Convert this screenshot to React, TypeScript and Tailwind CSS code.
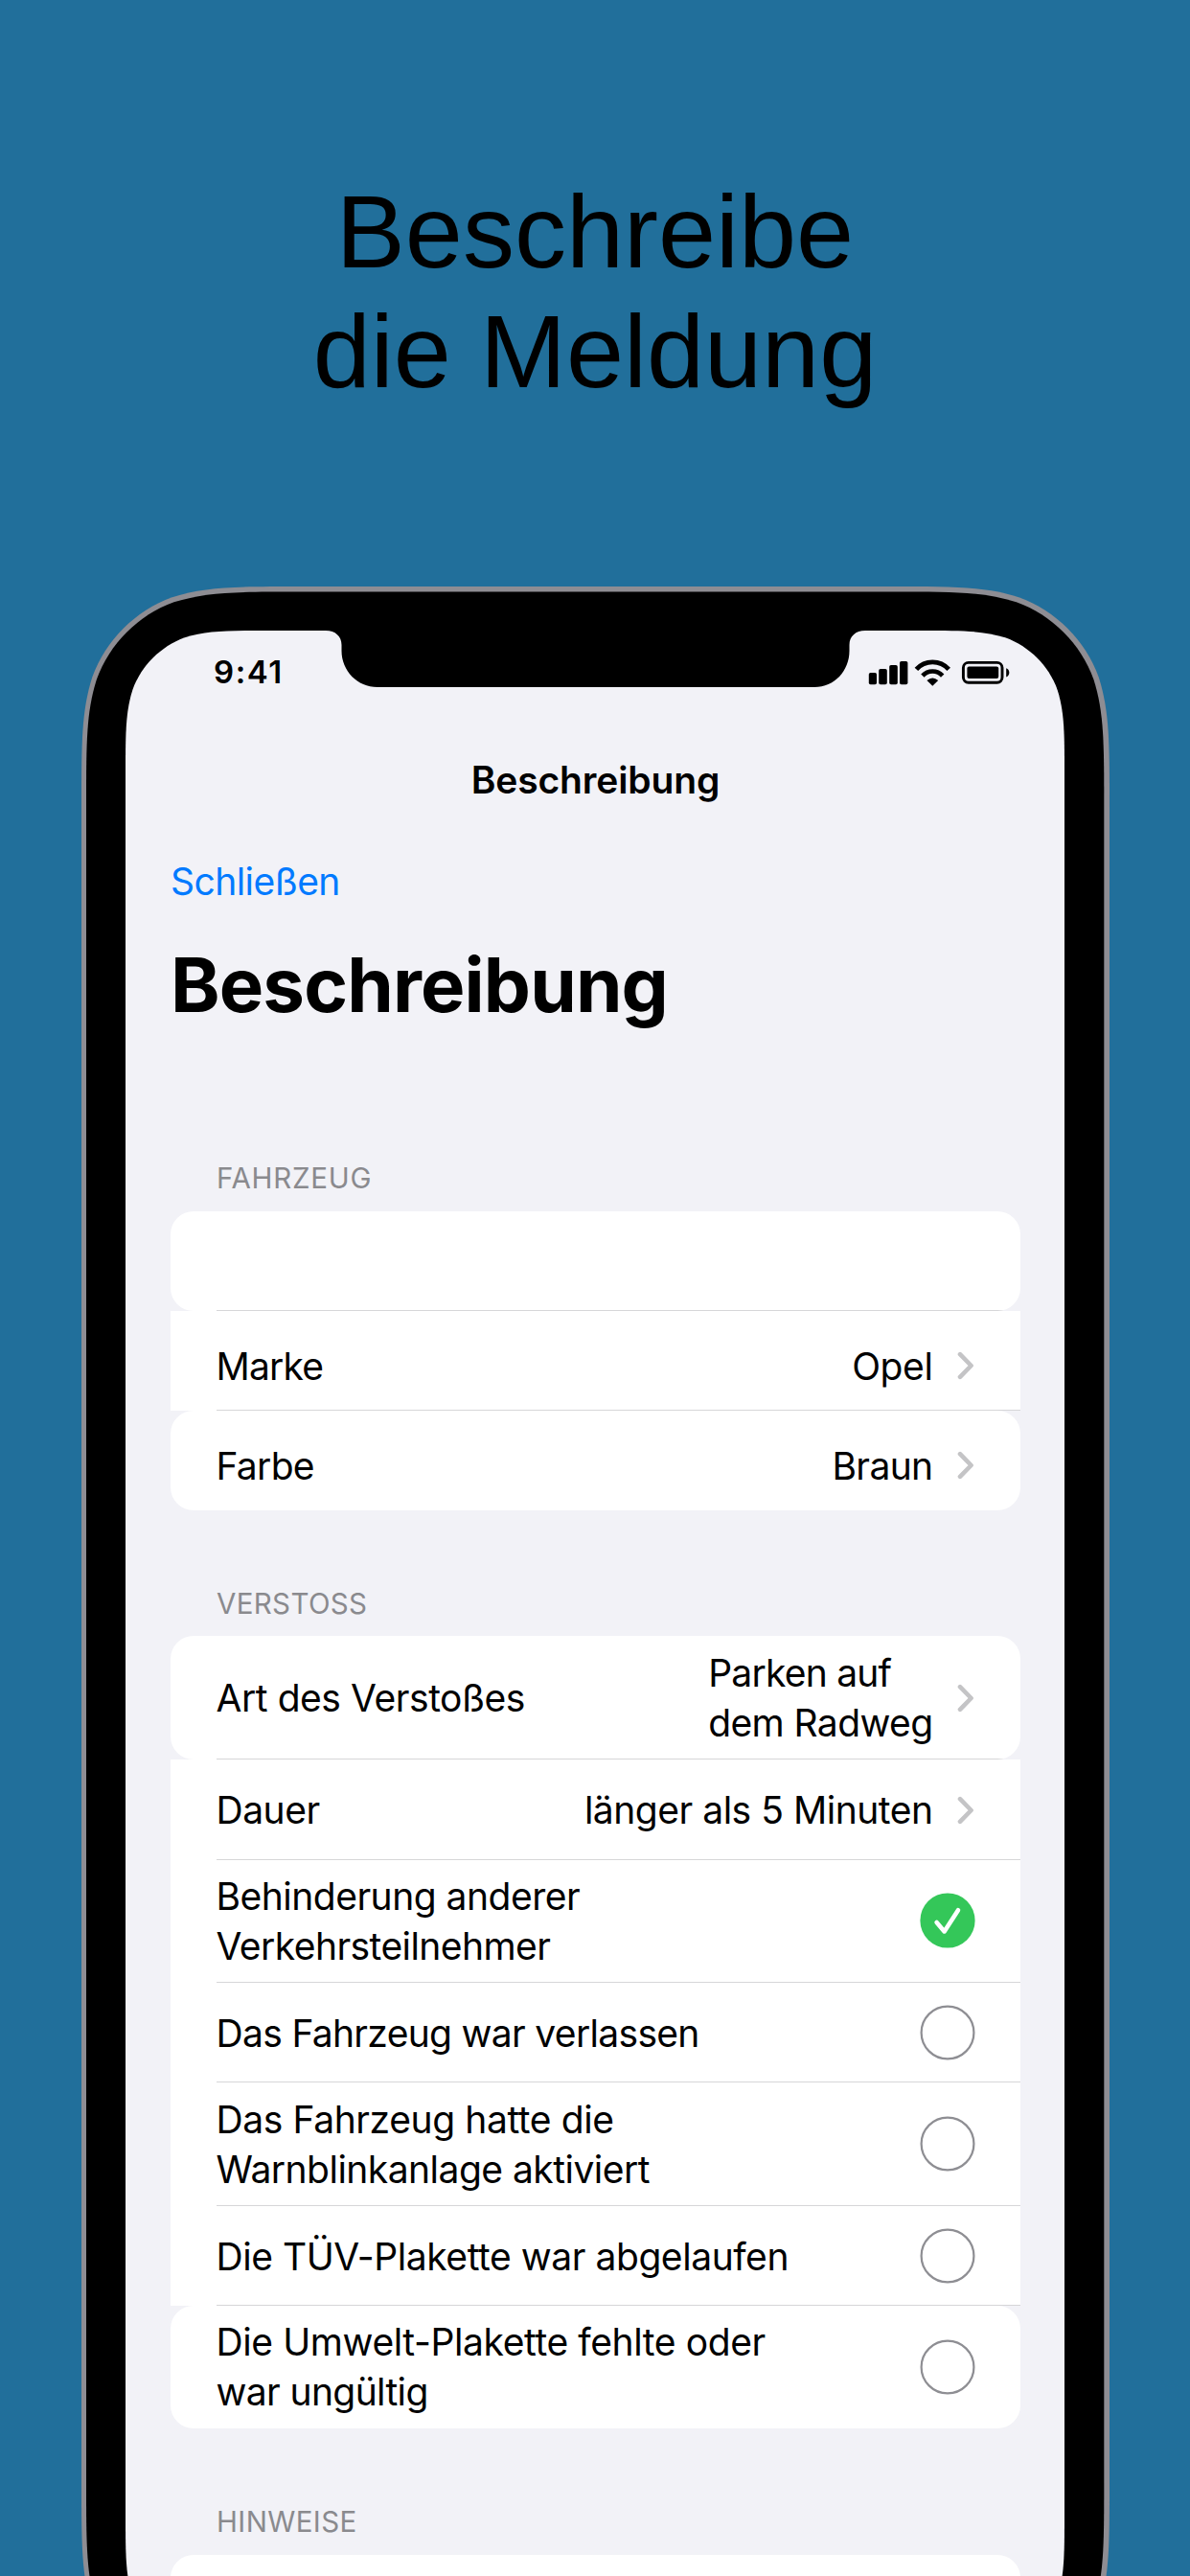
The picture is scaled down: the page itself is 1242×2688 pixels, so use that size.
import type { ReactNode } from "react";

/** Rectangle with continuous ("squircle") corners, as used for the device outline. */
function squircle(x: number, y: number, w: number, h: number, r: number): string {
  const a = 1.52866498 * r;
  const b = 1.08849296 * r;
  const c = 0.86840694 * r;
  const d = 0.63149379 * r;
  const e = 0.07491139 * r;
  const f = 0.37282383 * r;
  const g = 0.16905956 * r;
  const R = x + w;
  const B = y + h;
  return [
    `M${x + a} ${y}`,
    `L${R - a} ${y}`,
    `C${R - b} ${y} ${R - c} ${y} ${R - d} ${y + e}`,
    `C${R - f} ${y + g} ${R - g} ${y + f} ${R - e} ${y + d}`,
    `C${R} ${y + c} ${R} ${y + b} ${R} ${y + a}`,
    `L${R} ${B - a}`,
    `C${R} ${B - b} ${R} ${B - c} ${R - e} ${B - d}`,
    `C${R - g} ${B - f} ${R - f} ${B - g} ${R - d} ${B - e}`,
    `C${R - c} ${B} ${R - b} ${B} ${R - a} ${B}`,
    `L${x + a} ${B}`,
    `C${x + b} ${B} ${x + c} ${B} ${x + d} ${B - e}`,
    `C${x + f} ${B - g} ${x + g} ${B - f} ${x + e} ${B - d}`,
    `C${x} ${B - c} ${x} ${B - b} ${x} ${B - a}`,
    `L${x} ${y + a}`,
    `C${x} ${y + b} ${x} ${y + c} ${x + e} ${y + d}`,
    `C${x + g} ${y + f} ${x + f} ${y + g} ${x + d} ${y + e}`,
    `C${x + c} ${y} ${x + b} ${y} ${x + a} ${y}Z`,
  ].join("");
}

function DeviceFrame() {
  return (
    <svg
      className="absolute top-0 left-0 h-[2206px] w-[1073px]"
      viewBox="0 0 1073 2206"
      aria-hidden="true"
    >
      <path d={squircle(0, 0, 1073, 2206, 150)} fill="#8e8d93" />
      <path d={squircle(5, 5.5, 1062.3, 2195, 145)} fill="#000" />
      <path d={squircle(46, 46, 980, 2114, 98)} fill="#f2f2f7" />
      <path
        d="M253 44V46H255C265 46 271.5 52 271.5 61V67C271.5 88 288 105 309 105H765C786 105 801.5 88 801.5 67V61C801.5 52 808 46 818 46H820V44Z"
        fill="#000"
      />
    </svg>
  );
}

function StatusIcons() {
  return (
    <svg className="mt-[-1px] h-[44px] w-[160px]" viewBox="900 680 160 44" aria-hidden="true">
      <rect x="906.8" y="702" width="8.2" height="12.2" rx="1.8" />
      <rect x="917.2" y="698" width="8.6" height="16.2" rx="1.8" />
      <rect x="928.2" y="694" width="8.6" height="20.2" rx="1.8" />
      <rect x="939" y="690" width="8.4" height="24.2" rx="1.8" />
      <path d="M956.4 698.4A22.8 22.8 0 0 1 990.2 698.4" fill="none" stroke="#000" strokeWidth="4.8" />
      <path d="M962.9 705.1A14 14 0 0 1 983.7 705.1" fill="none" stroke="#000" strokeWidth="4.6" />
      <path d="M967.4 710Q973.3 704.8 979.2 710L973.3 715.8Z" />
      <rect x="1005.4" y="691.4" width="40.6" height="20.8" rx="5.4" fill="none" stroke="#000" strokeWidth="2.9" />
      <rect x="1009.4" y="695.6" width="32.8" height="12.4" rx="2" />
      <path d="M1050.2 697.2C1054.4 698.6 1054.4 705 1050.2 706.4Z" />
    </svg>
  );
}

function Chevron({ className = "" }: { className?: string }) {
  return (
    <svg
      className={`ml-[25.5px] h-[32px] w-[18px] shrink-0 ${className}`}
      viewBox="0 0 18 32"
      fill="none"
      stroke="#c4c4c6"
      strokeWidth="4.6"
      strokeLinecap="round"
      strokeLinejoin="round"
      aria-hidden="true"
    >
      <path d="M3 4.2L14.6 16L3 27.8" />
    </svg>
  );
}

function Check({ on, className = "" }: { on?: boolean; className?: string }) {
  return (
    <svg
      className={`mr-[-1px] h-[58px] w-[58px] shrink-0 ${className}`}
      viewBox="0 0 58 58"
      fill="none"
      aria-hidden="true"
    >
      {on ? (
        <>
          <circle cx="29" cy="29" r="28.6" fill="#34c759" />
          <path
            d="M17.6 31L25.6 40.4L40 18.2"
            stroke="#fff"
            strokeWidth="4.6"
            strokeLinecap="round"
            strokeLinejoin="round"
          />
        </>
      ) : (
        <circle cx="29" cy="29" r="27.4" stroke="#8e8e93" strokeWidth="2.2" />
      )}
    </svg>
  );
}

function Row({
  height,
  corners = "",
  divider = true,
  children,
}: {
  height: string;
  corners?: string;
  divider?: boolean;
  children?: ReactNode;
}) {
  return (
    <div
      className={`relative flex items-center overflow-hidden bg-white pr-12 pl-[47.5px] text-[39px] leading-[52px] ${height} ${corners}`}
    >
      {children}
      {divider && <span className="absolute right-0 bottom-0 left-[47.5px] h-px bg-[#d6d6d8]" />}
    </div>
  );
}

function Label({ className = "", children }: { className?: string; children: ReactNode }) {
  return <span className={`flex-1 whitespace-pre ${className}`}>{children}</span>;
}

function Value({ className = "", children }: { className?: string; children: ReactNode }) {
  return <span className={`whitespace-pre ${className}`}>{children}</span>;
}

function SectionTitle({ className, children }: { className: string; children: ReactNode }) {
  return (
    <h3 className={`pl-[48px] text-[29.5px] leading-[40px] text-[#8a8a8e] ${className}`}>{children}</h3>
  );
}

export default function App() {
  return (
    <div className="flex h-[2688px] w-[1242px] flex-col overflow-hidden bg-[#216f9b] text-black">
      <h1 className="pt-[179px] text-center font-['Liberation_Sans',Arial,sans-serif] text-[108px] leading-[125px]">
        Beschreibe
        <br />
        die Meldung
      </h1>

      <div className="relative mt-[183px] ml-[85px] h-[2076px] w-[1073px] shrink-0 overflow-hidden font-['Inter',sans-serif]">
        <DeviceFrame />

        <div className="relative px-[46px] pt-[46px]">
          <div className="flex h-[130px] items-start justify-between pt-[23px] pr-[52px] pl-[92px]">
            <span className="text-[33px] leading-[40px] font-semibold tracking-[1.6px]">9:41</span>
            <StatusIcons />
          </div>

          <h2 className="text-center text-[39px] leading-[52px] font-semibold tracking-[-0.15px]">
            Beschreibung
          </h2>

          <div className="px-[47px]">
            <a className="mt-[54px] block text-[39px] leading-[52px] tracking-[-0.55px] text-[#007aff]">
              Schließen
            </a>
            <h2 className="mt-[34px] text-[78px] leading-[96px] font-bold tracking-[-0.85px]">
              Beschreibung
            </h2>

            <SectionTitle className="mt-[133px] tracking-[0.75px]">FAHRZEUG</SectionTitle>
            <div className="mt-[15px]">
              <Row height="h-[104px]" corners="rounded-[24px]" />
              <Row height="h-[104px] pt-3">
                <Label className="tracking-[-0.8px]">Marke</Label>
                <Value className="tracking-[-0.38px]">Opel</Value>
                <Chevron className="mt-[-2px]" />
              </Row>
              <Row height="h-[104px] pt-3" corners="rounded-[24px]" divider={false}>
                <Label className="tracking-[-0.7px]">Farbe</Label>
                <Value className="tracking-[-0.64px]">Braun</Value>
                <Chevron className="mt-[-2px]" />
              </Row>
            </div>

            <SectionTitle className="mt-[77px] tracking-[0.35px]">VERSTOSS</SectionTitle>
            <div className="mt-[14px]">
              <Row height="h-[129px]" corners="rounded-[24px]">
                <Label className="tracking-[-0.45px]">Art des Verstoßes</Label>
                <Value>
                  <span className="block tracking-[-0.77px]">Parken auf</span>
                  <span className="block tracking-[-0.6px]">dem Radweg</span>
                </Value>
                <Chevron />
              </Row>
              <Row height="h-[105px]">
                <Label className="tracking-[-0.46px]">Dauer</Label>
                <Value className="tracking-[-0.48px]">länger als 5 Minuten</Value>
                <Chevron />
              </Row>
              <Row height="h-[128px]">
                <Label>
                  <span className="block tracking-[-0.5px]">Behinderung anderer</span>
                  <span className="block tracking-[-0.56px]">Verkehrsteilnehmer</span>
                </Label>
                <Check on className="mt-[-2px]" />
              </Row>
              <Row height="h-[104px]">
                <Label className="pt-[2px] tracking-[-0.68px]">Das Fahrzeug war verlassen</Label>
                <Check />
              </Row>
              <Row height="h-[129px]">
                <Label>
                  <span className="block tracking-[-0.4px]">Das Fahrzeug hatte die</span>
                  <span className="block tracking-[-0.52px]">Warnblinkanlage aktiviert</span>
                </Label>
                <Check className="mt-[-1px]" />
              </Row>
              <Row height="h-[104px]">
                <Label className="pt-[2px] tracking-[-0.44px]">Die TÜV-Plakette war abgelaufen</Label>
                <Check />
              </Row>
              <Row height="h-[128px]" corners="rounded-[24px]" divider={false}>
                <Label>
                  <span className="block tracking-[-0.4px]">Die Umwelt-Plakette fehlte oder</span>
                  <span className="block tracking-[-0.62px]">war ungültig</span>
                </Label>
                <Check />
              </Row>
            </div>

            <SectionTitle className="mt-[77px] tracking-[0.4px]">HINWEISE</SectionTitle>
            <div className="mt-[15px]">
              <Row height="h-[104px]" corners="rounded-[24px]" />
            </div>
          </div>
        </div>
      </div>
    </div>
  );
}
